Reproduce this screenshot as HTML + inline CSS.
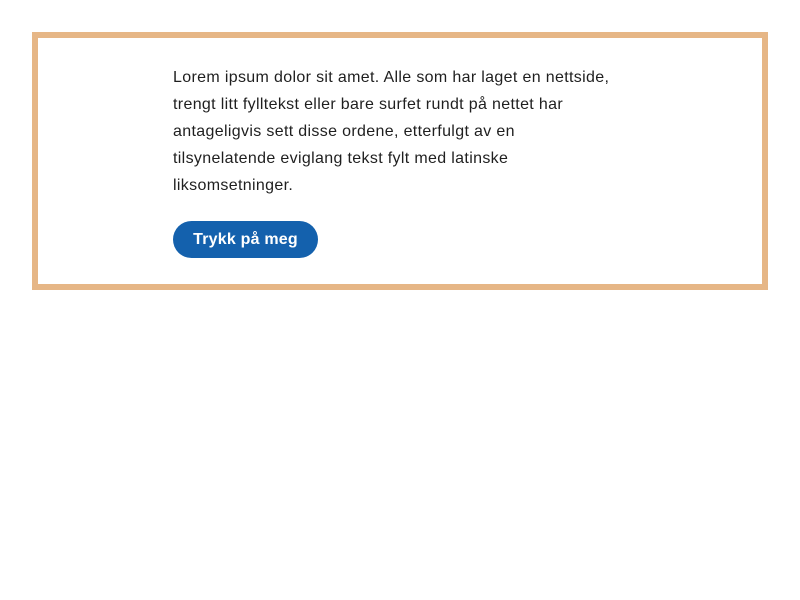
<!DOCTYPE html>
<html><head><style>
html,body{margin:0;padding:0;background:#fff;}
.box{position:absolute;left:32px;top:32px;width:724px;height:246px;border:6px solid #e6b686;}
.txt{position:absolute;left:135px;top:26px;font-family:"Liberation Sans",sans-serif;font-size:16px;line-height:27px;color:#1f1f1f;letter-spacing:0.34px;white-space:nowrap;}
.btn{position:absolute;left:135px;top:183px;width:145px;height:37px;border-radius:19px;background:#1461ad;color:#fff;font-family:"Liberation Sans",sans-serif;font-weight:bold;font-size:16px;line-height:37px;text-align:center;letter-spacing:0.2px;}
</style></head><body>
<div class="box">
<div class="txt">Lorem ipsum dolor sit amet. Alle som har laget en nettside,<br>trengt litt fylltekst eller bare surfet rundt på nettet har<br>antageligvis sett disse ordene, etterfulgt av en<br>tilsynelatende eviglang tekst fylt med latinske<br>liksomsetninger.</div>
<div class="btn">Trykk på meg</div>
</div>
</body></html>
